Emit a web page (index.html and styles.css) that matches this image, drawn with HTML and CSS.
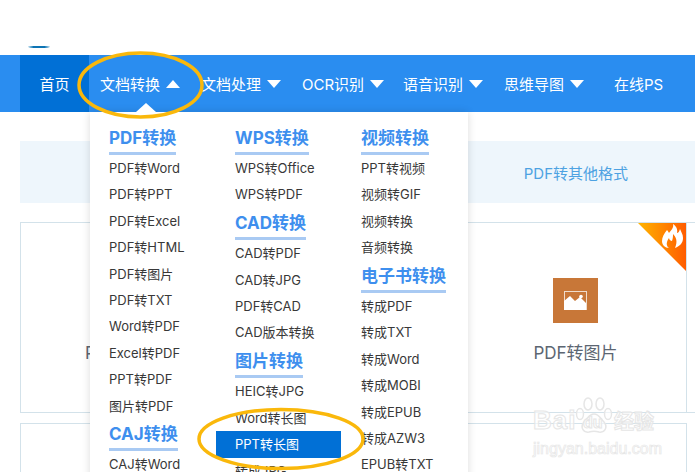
FILE: index.html
```html
<!DOCTYPE html>
<html lang="zh-CN">
<head>
<meta charset="utf-8">
<title>文档转换</title>
<link rel="stylesheet" href="styles.css">
</head>
<body>
<div class="page">
  <header class="top"><span class="logo-sliver"></span></header>
  <nav class="nav">
    <a class="nav-home">首页</a>
    <a class="nav-item nav-open">文档转换<i class="caret up"></i></a>
    <a class="nav-item">文档处理<i class="caret"></i></a>
    <a class="nav-item">OCR识别<i class="caret"></i></a>
    <a class="nav-item">语音识别<i class="caret"></i></a>
    <a class="nav-item">思维导图<i class="caret"></i></a>
    <a class="nav-item nav-plain">在线PS</a>
  </nav>
  <main class="content">
    <div class="strip"><span class="strip-label">PDF转其他格式</span></div>
    <div class="cards">
      <div class="card"><span class="card-icon blank"></span><span class="card-name">PDF转Word</span></div>
      <div class="card"></div>
      <div class="card">
        <svg class="hot" viewBox="0 0 48 48" aria-hidden="true">
          <defs><linearGradient id="hotg" x1="0" y1="0" x2="1" y2="0"><stop offset="0" stop-color="#ffb400"/><stop offset="1" stop-color="#ff5c00"/></linearGradient></defs>
          <path d="M0 0H48V48Z" fill="url(#hotg)"/>
          <path d="M35 1C36 5 33 7 31 10C30 8 29 7 29 7C26 11 24 14 24 18C24 22 27 25 31 25C28 23 28 19 31 15C31 17 33 18 34 18C35 15 35 13 35 11C38 14 40 18 37 25C42 23 45 20 45 15C45 11 43 9 42 6C41 9 40 10 39 10C40 6 38 3 35 1Z" fill="#fff"/>
        </svg>
        <span class="card-icon">
          <svg viewBox="0 0 45 45" width="45" height="45" aria-hidden="true">
            <rect x="11.500" y="13.500" width="22" height="18" fill="none" stroke="#f0dccb" stroke-width="1"/>
            <path d="M11 32V23l6-5 5 5 5-4 6 6v7Z" fill="#fff"/>
            <circle cx="28" cy="18.500" r="1.800" fill="#fff"/>
          </svg>
        </span>
        <span class="card-name">PDF转图片</span>
      </div>
      <div class="card"></div>
      <div class="card"></div>
      <div class="card"></div>
      <div class="card"></div>
    </div>
  </main>

  <div class="menu">
    <span class="menu-arrow"></span>
    <div class="menu-col">
      <h3 class="menu-head"><span>PDF转换</span></h3>
      <a class="menu-link">PDF转Word</a>
      <a class="menu-link">PDF转PPT</a>
      <a class="menu-link">PDF转Excel</a>
      <a class="menu-link">PDF转HTML</a>
      <a class="menu-link">PDF转图片</a>
      <a class="menu-link">PDF转TXT</a>
      <a class="menu-link">Word转PDF</a>
      <a class="menu-link">Excel转PDF</a>
      <a class="menu-link">PPT转PDF</a>
      <a class="menu-link">图片转PDF</a>
      <h3 class="menu-head"><span>CAJ转换</span></h3>
      <a class="menu-link">CAJ转Word</a>
    </div>
    <div class="menu-col">
      <h3 class="menu-head"><span>WPS转换</span></h3>
      <a class="menu-link">WPS转Office</a>
      <a class="menu-link">WPS转PDF</a>
      <h3 class="menu-head"><span>CAD转换</span></h3>
      <a class="menu-link">CAD转PDF</a>
      <a class="menu-link">CAD转JPG</a>
      <a class="menu-link">PDF转CAD</a>
      <a class="menu-link">CAD版本转换</a>
      <h3 class="menu-head"><span>图片转换</span></h3>
      <a class="menu-link">HEIC转JPG</a>
      <a class="menu-link">Word转长图</a>
      <a class="menu-link active">PPT转长图</a>
      <a class="menu-link">转成JPG</a>
    </div>
    <div class="menu-col">
      <h3 class="menu-head"><span>视频转换</span></h3>
      <a class="menu-link">PPT转视频</a>
      <a class="menu-link">视频转GIF</a>
      <a class="menu-link">视频转换</a>
      <a class="menu-link">音频转换</a>
      <h3 class="menu-head"><span>电子书转换</span></h3>
      <a class="menu-link">转成PDF</a>
      <a class="menu-link">转成TXT</a>
      <a class="menu-link">转成Word</a>
      <a class="menu-link">转成MOBI</a>
      <a class="menu-link">转成EPUB</a>
      <a class="menu-link">转成AZW3</a>
      <a class="menu-link">EPUB转TXT</a>
    </div>
  </div>

  <svg class="marks" viewBox="0 0 695 472" aria-hidden="true">
    <ellipse cx="140.500" cy="85" rx="61.500" ry="32" />
    <ellipse cx="281" cy="439" rx="82" ry="29.500" />
  </svg>

  <div class="watermark">
    <div class="wm-row">
      <span class="wm-bai">Bai</span>
      <span class="wm-paw">
        <svg viewBox="0 0 38 37" width="38" height="37" aria-hidden="true">
          <g fill="rgba(255,255,255,.6)" stroke="#e6e6e6" stroke-width="1.500">
            <ellipse cx="5" cy="17" rx="3.500" ry="5.500"/><ellipse cx="13" cy="7" rx="4" ry="6"/>
            <ellipse cx="25" cy="7" rx="4" ry="6"/><ellipse cx="33" cy="17" rx="3.500" ry="5.500"/>
            <path d="M19 17c-5 0-6 4-10 8-4 5-1 11 5 10 3-1 7-1 10 0 6 1 9-5 5-10-4-4-5-8-10-8Z"/>
          </g>
        </svg>
        <span class="wm-du">du</span>
      </span>
      <span class="wm-cn">经验</span>
    </div>
    <div class="wm-url">jingyan.baidu.com</div>
  </div>
</div>
</body>
</html>
```

FILE: styles.css
```css
* { box-sizing: border-box; }
html, body { margin: 0; padding: 0; }
body {
  width: 695px;
  height: 472px;
  overflow: hidden;
  background: #fff;
  font-family: "Inter", "Noto Sans CJK SC", sans-serif;
}
.page { position: relative; width: 695px; height: 472px; overflow: hidden; }

.top { display: flow-root; height: 55px; padding-left: 28px; }
.logo-sliver {
  display: block;
  width: 22px;
  height: 2px;
  margin-top: 46px;
  background: linear-gradient(90deg, #cfe6f3, #0d74b4 25%, #0d74b4 75%, #cfe6f3);
  border-radius: 0 0 10px 10px;
}

.nav {
  display: flex;
  align-items: center;
  height: 57px;
  padding-left: 20px;
  background: #2a8df0;
  color: #fff;
  font-size: 15px;
}
.nav-home {
  display: flex;
  align-items: center;
  justify-content: center;
  width: 69px;
  height: 57px;
  background: #0170d6;
}
.nav-item { display: flex; align-items: center; width: 101px; padding-left: 11px; white-space: nowrap; }
.nav-plain { padding-left: 20px; }
.caret {
  width: 0;
  height: 0;
  margin-left: 6px;
  border-left: 7.500px solid transparent;
  border-right: 7.500px solid transparent;
  border-top: 8px solid #fff;
}
.caret.up { border-top: 0; border-bottom: 8px solid #fff; }

.content { padding: 29px 0 0 20px; }
.strip {
  display: flex;
  align-items: center;
  justify-content: flex-end;
  width: 675px;
  height: 62px;
  padding-right: 67px;
  background: #eef6fc;
}
.strip-label { font-size: 15px; color: #4da2e2; }
.cards {
  display: grid;
  grid-template-columns: repeat(4, 222px);
  grid-auto-rows: 191px;
  row-gap: 10px;
  margin-top: 19px;
}
.card {
  position: relative;
  display: flex;
  flex-direction: column;
  align-items: center;
  padding-top: 55px;
  margin-right: -1px;
  border: 1px solid #d3e2ea;
  background: #fff;
}
.card-icon { display: block; width: 45px; height: 45px; background: #c87738; }
.card-icon.blank { background: transparent; }
.card-name { margin-top: 17px; font-size: 17px; line-height: 26px; color: #5c6672; white-space: nowrap; }
.hot { position: absolute; top: 0; right: 0; width: 48px; height: 48px; }

.menu {
  position: absolute;
  left: 90px;
  top: 112px;
  width: 378px;
  height: 372px;
  display: grid;
  grid-template-columns: 126px 126px 126px;
  padding-top: 10.500px;
  background: #fff;
  box-shadow: 0 0 8px rgba(0, 0, 0, .14);
}
.menu-arrow {
  position: absolute;
  left: 46px;
  top: -9px;
  width: 0;
  height: 0;
  border-left: 10px solid transparent;
  border-right: 10px solid transparent;
  border-bottom: 9px solid #fff;
}
.menu-col { min-width: 0; }
.menu-head { height: 32.500px; margin: 0; padding-left: 19px; font-size: 17px; line-height: 30px; font-weight: 700; color: #3e8fee; }
.menu-head span { display: inline-block; height: 32px; border-bottom: 3px solid #a9caf3; white-space: nowrap; }
.menu-link {
  display: block;
  height: 26.400px;
  padding-left: 19px;
  font-size: 13px;
  line-height: 26px;
  color: #383838;
  white-space: nowrap;
}
.menu-link.active { background: #0170d6; color: #fff; width: 125px; }

.marks { position: absolute; inset: 0; width: 695px; height: 472px; pointer-events: none; }
.marks ellipse { fill: none; stroke: #fab80b; stroke-width: 3.500px; }

.watermark {
  position: absolute;
  left: 533px;
  top: 396px;
  width: 126px;
  color: rgba(255, 255, 255, .6);
  font-family: "Liberation Sans", "Noto Sans CJK SC", sans-serif;
  -webkit-text-stroke: 1px #e6e6e6;
}
.wm-row { display: flex; align-items: flex-end; height: 39px; white-space: nowrap; }
.wm-bai { font-size: 26px; line-height: 30px; font-weight: 700; width: 42px; letter-spacing: 1px; }
.wm-paw { position: relative; display: block; width: 38px; height: 37px; margin-bottom: 1px; }
.wm-paw svg { display: block; }
.wm-du { position: absolute; left: 8px; top: 17px; font-size: 16px; line-height: 18px; font-weight: 700; }
.wm-cn { margin-left: 1px; font-size: 20px; line-height: 26px; font-weight: 700; }
.wm-url { margin-top: 5px; font-size: 16px; line-height: 18px; white-space: nowrap; -webkit-text-stroke: .7px #e6e6e6; }
```
